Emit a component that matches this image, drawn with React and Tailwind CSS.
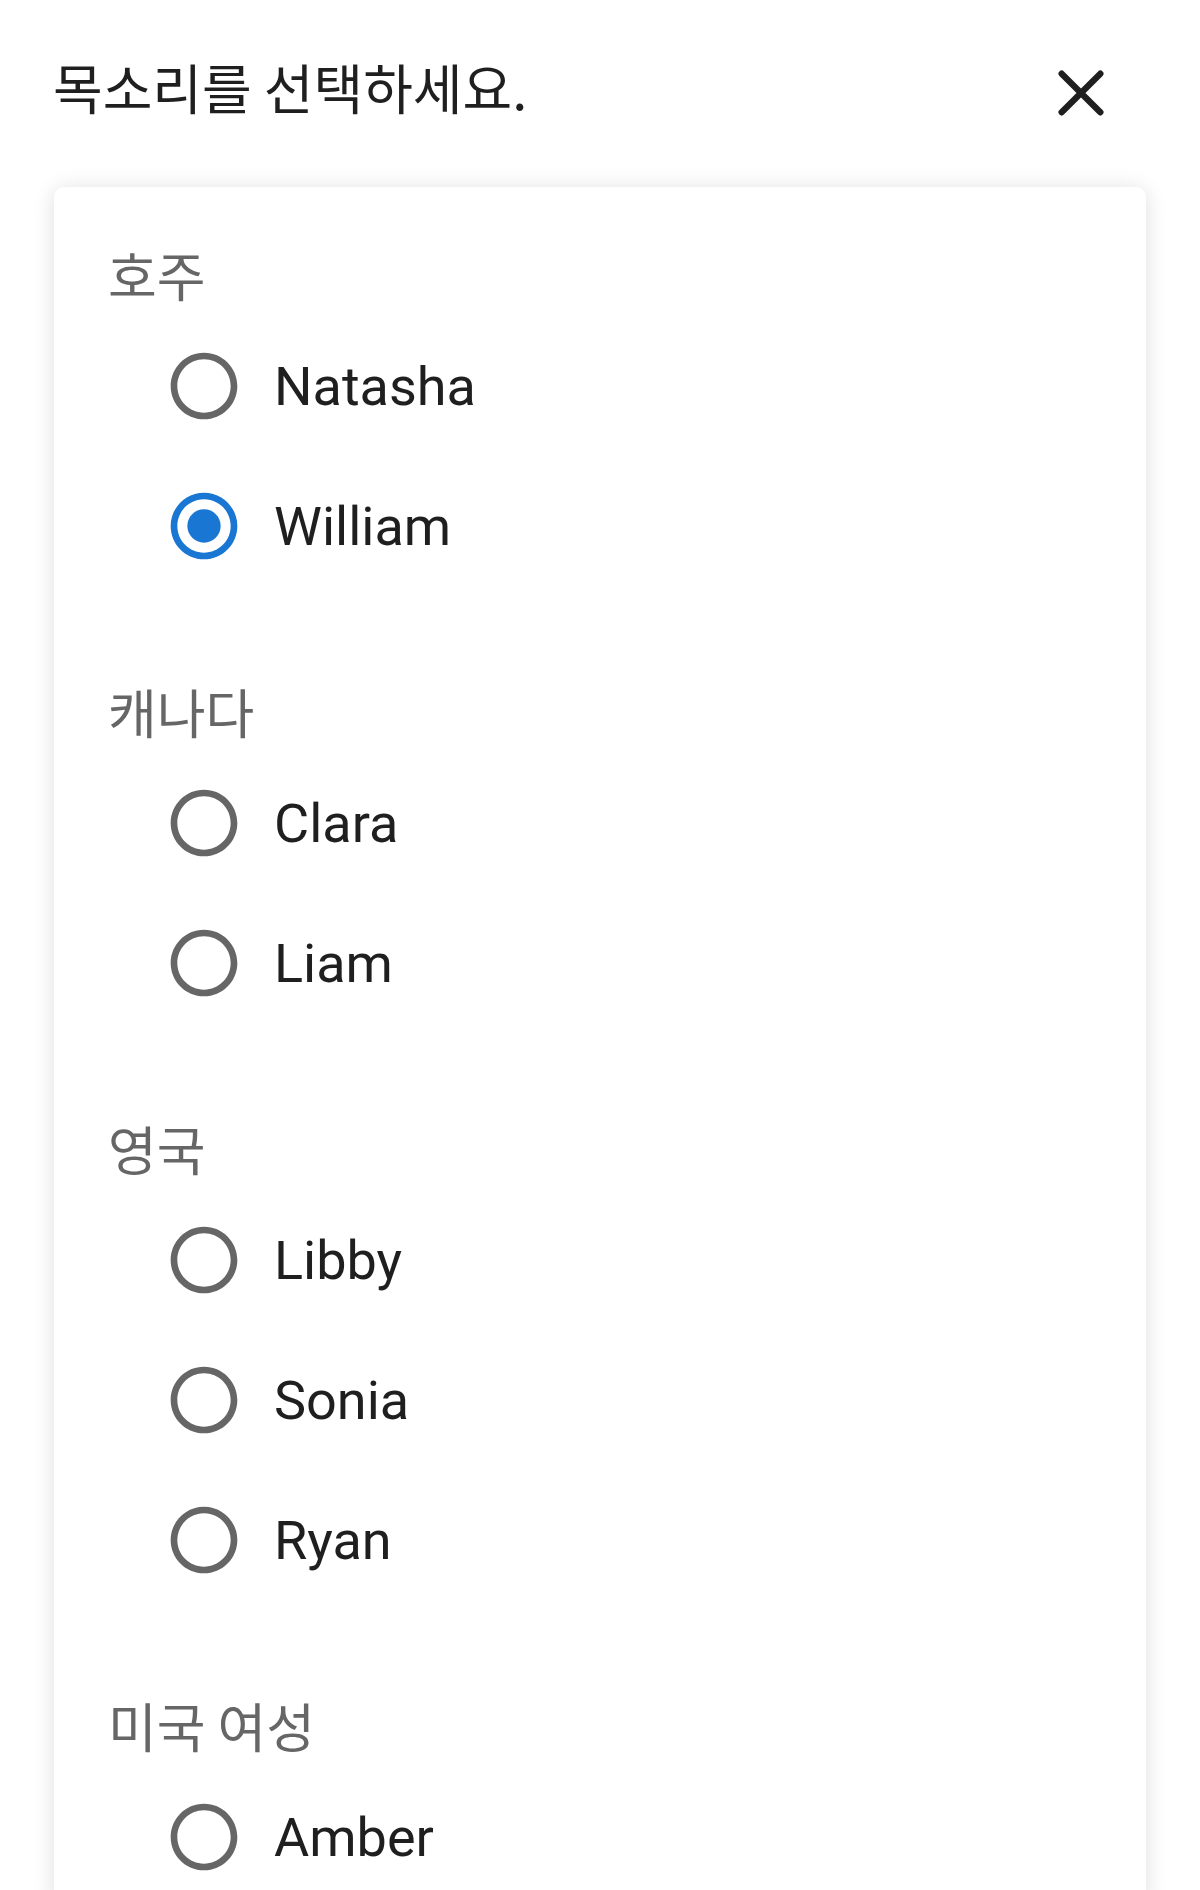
import { useState } from "react";

const groups = [
  { label: "호주", voices: ["Natasha", "William"] },
  { label: "캐나다", voices: ["Clara", "Liam"] },
  { label: "영국", voices: ["Libby", "Sonia", "Ryan"] },
  { label: "미국 여성", voices: ["Amber"] },
];

const krFont = { fontFamily: '"Noto Sans CJK KR", "Noto Sans", sans-serif' };

function RadioIcon({ checked }) {
  return (
    <svg viewBox="0 0 24 24" className="w-[80px] h-[80px] shrink-0">
      <path
        fill={checked ? "#1976d2" : "#666666"}
        d="M12 2C6.48 2 2 6.48 2 12s4.48 10 10 10 10-4.48 10-10S17.52 2 12 2zm0 18c-4.42 0-8-3.58-8-8s3.58-8 8-8 8 3.58 8 8-3.58 8-8 8z"
      />
      {checked && (
        <path
          fill="#1976d2"
          d="M12 7c-2.76 0-5 2.24-5 5s2.24 5 5 5 5-2.24 5-5-2.24-5-5-5z"
        />
      )}
    </svg>
  );
}

function App() {
  const [voice, setVoice] = useState("William");

  return (
    <div className="min-h-screen bg-white overflow-hidden">
      <div className="flex items-start justify-between pl-[53px] pr-[79px] pt-[50px]">
        <h1
          className="text-[54px] leading-[74px] text-[#1f1f1f] font-normal"
          style={krFont}
        >
          목소리를 선택하세요.
        </h1>
        <button className="w-[80px] h-[80px] mt-[3px]">
          <svg viewBox="0 0 24 24" className="w-[80px] h-[80px]">
            <path
              d="M6.2 6.2 17.8 17.8M17.8 6.2 6.2 17.8"
              stroke="#1f1f1f"
              strokeWidth="1.9"
              strokeLinecap="round"
              fill="none"
            />
          </svg>
        </button>
      </div>

      <div className="mx-[54px] mt-[54px] rounded-[10px] bg-white shadow-[0_2px_22px_rgba(0,0,0,0.13)] pt-[60px] pl-[54px] flex flex-col gap-[88px]">
        {groups.map((g) => (
          <div key={g.label}>
            <div
              className="h-[60px] leading-[55px] text-[53px] text-[#666666]"
              style={krFont}
            >
              {g.label}
            </div>
            <ul className="mt-[9px]">
              {g.voices.map((v) => (
                <li
                  key={v}
                  onClick={() => setVoice(v)}
                  className="flex items-center gap-[30px] h-[140px] pl-[56px] cursor-pointer"
                >
                  <RadioIcon checked={voice === v} />
                  <span
                    className="text-[54px] text-[#1f1f1f]"
                    style={{ fontFamily: "Roboto, sans-serif" }}
                  >
                    {v}
                  </span>
                </li>
              ))}
            </ul>
          </div>
        ))}
      </div>
    </div>
  );
}

export default App;
